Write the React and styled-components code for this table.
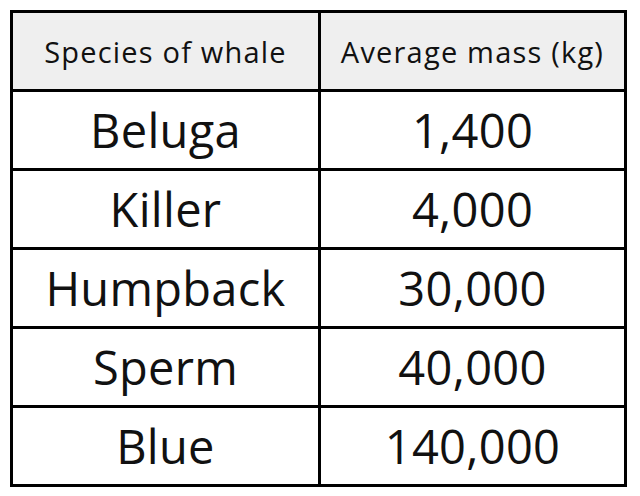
import React from "react";
import styled, { createGlobalStyle } from "styled-components";

const Global = createGlobalStyle`
  html, body { margin: 0; padding: 0; background: #ffffff; }
  body { font-family: "Open Sans", "Noto Sans", sans-serif; }
`;

const Page = styled.div`
  width: 640px;
  height: 496px;
  padding: 10px 0 0 10px;
  box-sizing: border-box;
`;

const Grid = styled.div`
  display: grid;
  grid-template-columns: 305px 303px;
  grid-auto-rows: 76px;
  gap: 3px;
  padding: 3px;
  background: #000;
  width: max-content;
`;

const Cell = styled.div`
  display: flex;
  align-items: center;
  justify-content: center;
  background: ${(p) => (p.$head ? "#efefef" : "#ffffff")};
  color: #111;
  font-family: "Open Sans", "Noto Sans", sans-serif;
  font-size: ${(p) => (p.$head ? "29px" : "47px")};
  letter-spacing: ${(p) => (p.$head ? "1.2px" : "0.3px")};
  font-weight: ${(p) => (p.$head ? 500 : 400)};
  white-space: nowrap;
`;

const rows = [
  ["Beluga", "1,400"],
  ["Killer", "4,000"],
  ["Humpback", "30,000"],
  ["Sperm", "40,000"],
  ["Blue", "140,000"],
];

export default function App() {
  return (
    <Page>
      <Global />
      <Grid>
        <Cell $head>Species of whale</Cell>
        <Cell $head>Average mass (kg)</Cell>
        {rows.map(([a, b]) => (
          <React.Fragment key={a}>
            <Cell>{a}</Cell>
            <Cell>{b}</Cell>
          </React.Fragment>
        ))}
      </Grid>
    </Page>
  );
}
